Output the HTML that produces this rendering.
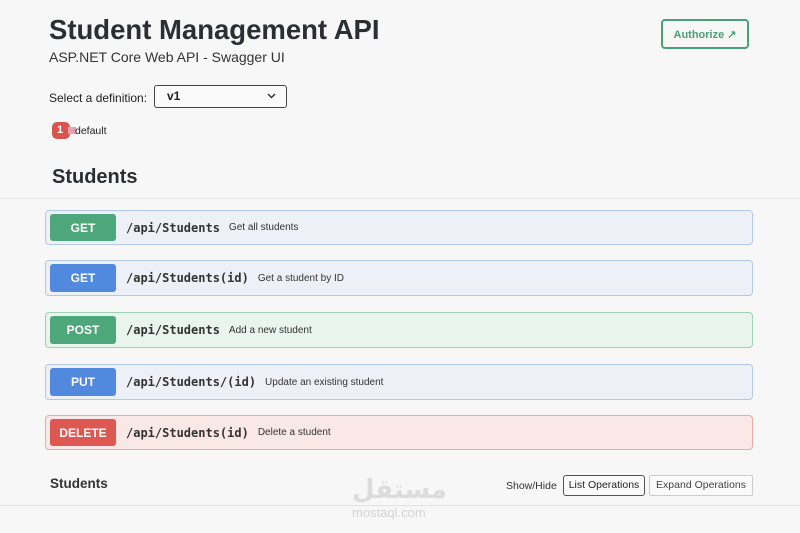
<!DOCTYPE html>
<html><head><style>
body{margin:0;width:800px;height:533px;background:#f7f7f7;font-family:"Liberation Sans",sans-serif;position:relative;overflow:hidden;color:#222}
.a{position:absolute}
h1{position:absolute;left:49px;top:14px;margin:0;font-size:27.5px;font-weight:bold;color:#2b2f33}
.row{position:absolute;left:45px;width:706px;border:1px solid;border-radius:4px}
.b{position:absolute;left:4px;top:3px;width:66px;bottom:3px;border-radius:3px;color:#fff;font-weight:bold;font-size:12px;display:flex;align-items:center;justify-content:center}
.p{position:absolute;left:80px;top:0;bottom:0;display:flex;align-items:center;font-family:"DejaVu Sans Mono","Liberation Mono",monospace;font-weight:bold;font-size:12px;color:#333}
.p span{font-family:"Liberation Sans",sans-serif;font-weight:normal;font-size:10px;margin-left:9px;color:#333}
</style></head><body>
<h1>Student Management API</h1>
<div class="a" style="left:49px;top:49px;font-size:14px;color:#333">ASP.NET Core Web API - Swagger UI</div>
<div class="a" style="left:661px;top:19px;width:84px;height:26px;border:2px solid #49a07a;border-radius:4px;color:#49a07a;font-weight:bold;font-size:11px;display:flex;align-items:center;justify-content:center">Authorize ↗</div>
<div class="a" style="left:49px;top:91px;font-size:12px">Select a definition:</div>
<div class="a" style="left:154px;top:85px;width:131px;height:21px;border:1px solid #444;border-radius:3px;background:#fafafa"><b style="position:absolute;left:12px;top:3px;font-size:12px">v1</b><svg style="position:absolute;right:10px;top:7px" width="9" height="6" viewBox="0 0 9 6"><path d="M1 1l3.5 3.5L8 1" fill="none" stroke="#333" stroke-width="1.5"/></svg></div>
<div class="a" style="left:52px;top:122px;width:18px;height:17px;background:#d9534f;border-radius:5px;color:#fff;font-size:11px;font-weight:bold;line-height:17px;text-indent:5px">1</div>
<div class="a" style="left:68px;top:127px;width:8px;height:7px;background:#e8a0b0"></div>
<div class="a" style="left:75px;top:125px;font-size:10.5px">default</div>
<div class="a" style="left:52px;top:166px;font-size:20px;font-weight:bold;color:#2b2f33">Students</div>
<div class="a" style="left:0;top:198px;width:800px;border-top:1px solid #e4e4e4"></div>

<div class="row" style="top:210px;height:33px;background:#edf1f7;border-color:#b5c8e6"><div class="b" style="background:#4ea77a">GET</div><div class="p">/api/Students<span>Get all students</span></div></div>
<div class="row" style="top:260px;height:34px;background:#edf1f7;border-color:#b5c8e6"><div class="b" style="background:#5089de">GET</div><div class="p">/api/Students(id)<span>Get a student by ID</span></div></div>
<div class="row" style="top:312px;height:34px;background:#e8f4ec;border-color:#9fd3b2"><div class="b" style="background:#4ea77a">POST</div><div class="p">/api/Students<span>Add a new student</span></div></div>
<div class="row" style="top:364px;height:34px;background:#edf1f7;border-color:#b5c8e6"><div class="b" style="background:#5089de">PUT</div><div class="p">/api/Students/(id)<span>Update an existing student</span></div></div>
<div class="row" style="top:415px;height:33px;background:#fae8e6;border-color:#e9aaa5"><div class="b" style="background:#dc5850">DELETE</div><div class="p">/api/Students(id)<span>Delete a student</span></div></div>

<div class="a" style="left:50px;top:476px;font-size:13.5px;font-weight:bold;color:#333">Students</div>
<div class="a" style="left:506px;top:480px;font-size:10.5px;color:#333">Show/Hide</div>
<div class="a" style="left:563px;top:475px;width:80px;height:19px;border:1px solid #555;border-radius:3px;background:#fafafa;font-size:10.5px;line-height:19px;text-align:center">List Operations</div>
<div class="a" style="left:649px;top:475px;width:102px;height:19px;border:1px solid #ccc;border-radius:2px;background:#fafafa;font-size:10.5px;line-height:19px;text-align:center;color:#444">Expand Operations</div>
<div class="a" style="left:0;top:505px;width:800px;border-top:1px solid #e2e2e2"></div>
<div class="a" style="left:352px;top:475px;font-size:26px;font-weight:bold;color:#dcdcdc;font-family:'DejaVu Sans',sans-serif">مستقل</div>
<div class="a" style="left:352px;top:505px;font-size:13px;color:#d4d4d4">mostaql.com</div>
</body></html>
